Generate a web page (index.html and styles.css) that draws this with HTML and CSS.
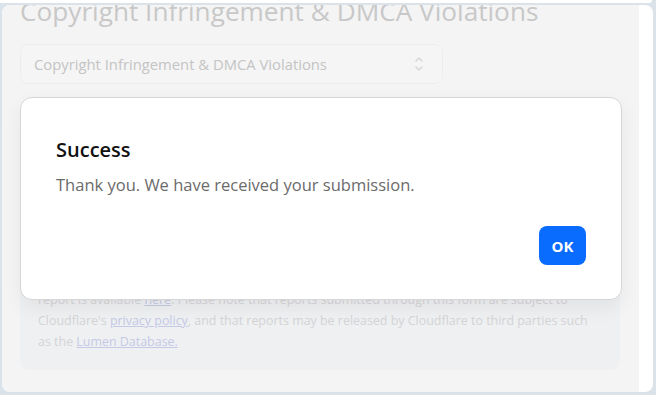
FILE: index.html
```html
<!DOCTYPE html>
<html lang="en">
<head>
  <meta charset="UTF-8" />
  <meta name="viewport" content="width=device-width, initial-scale=1.0" />
  <title>Report Abuse</title>
  <link rel="stylesheet" href="styles.css">
</head>
<body>
  <div class="prev-card"></div>

  <div class="page-card">
    <div class="form-area">
      <h1 class="form-title">Copyright Infringement &amp; DMCA Violations</h1>

      <div class="select-box">
        <span>Copyright Infringement &amp; DMCA Violations</span>
        <svg class="chevrons" width="10" height="16" viewBox="0 0 10 16">
          <path d="M1.5 5.5 L5 2 L8.5 5.5" />
          <path d="M1.5 10.5 L5 14 L8.5 10.5" />
        </svg>
      </div>

      <div class="notice">
        <p>
          Once submitted, you will receive a confirmation email. A copy of your<br>
          report is available <a href="#">here</a>. Please note that reports submitted through this form are subject to<br>
          Cloudflare's <a href="#">privacy policy</a>, and that reports may be released by Cloudflare to third parties such<br>
          as the <a href="#">Lumen Database.</a>
        </p>
      </div>
    </div>

    <div class="modal">
      <h2>Success</h2>
      <p>Thank you. We have received your submission.</p>
      <div class="modal-actions">
        <button>OK</button>
      </div>
    </div>
  </div>
</body>
</html>
```

FILE: styles.css
```css
html, body {
  margin: 0;
  padding: 0;
  height: 100%;
  overflow: hidden;
  background: #dae3ea;
  font-family: 'Open Sans', 'Noto Sans', sans-serif;
}
.prev-card {
  height: 3px;
  margin-right: 4px;
  background: #fff;
  border-radius: 0 0 8px 0;
}
.page-card {
  position: relative;
  margin: 2px 3px 0 2px;
  height: 387px;
  background: #fff;
  border-radius: 8px;
  overflow: hidden;
}
.form-area {
  display: flow-root;
  width: 637px;
  height: 100%;
  box-sizing: border-box;
  padding: 0 18px;
  background: #f4f4f4;
  border-radius: 8px 0 0 8px;
}
.form-title {
  margin: -12px 0 0 0;
  font-size: 26.2px;
  font-weight: 400;
  line-height: 36px;
  color: #c8c8c8;
  white-space: nowrap;
}
.select-box {
  margin-top: 15px;
  width: 423px;
  height: 40px;
  box-sizing: border-box;
  display: flex;
  align-items: center;
  justify-content: space-between;
  padding: 0 18px 0 13px;
  border: 1px solid #ededed;
  border-radius: 8px;
  background: #f5f5f5;
  font-size: 14.8px;
  color: #c4c4c4;
}
.chevrons path {
  fill: none;
  stroke: #d3d3d3;
  stroke-width: 1.2;
}
.notice {
  margin-top: 166px;
  height: 120px;
  box-sizing: border-box;
  padding: 0 18px;
  display: flex;
  align-items: flex-end;
  background: #eff0f2;
  border-radius: 8px;
  width: 600px;
}
.notice p {
  margin: 0 0 18px 0;
  font-size: 12.45px;
  line-height: 21px;
  color: #d4d4d6;
  white-space: nowrap;
}
.notice a {
  color: #c5c9e6;
}
.modal {
  position: absolute;
  left: 18px;
  top: 92px;
  width: 602px;
  height: 203px;
  box-sizing: border-box;
  padding: 38px 35px 0 35px;
  background: #fff;
  border: 1px solid #d6d6d6;
  border-radius: 12px;
  box-shadow: 0 8px 20px rgba(0, 0, 0, 0.06);
}
.modal h2 {
  margin: 0;
  font-size: 20px;
  font-weight: 600;
  line-height: 28px;
  color: #111;
}
.modal p {
  margin: 10px 0 0 0;
  font-size: 16.5px;
  line-height: 22px;
  color: #6b6b6b;
}
.modal-actions {
  display: flex;
  justify-content: flex-end;
  margin-top: 30px;
}
.modal-actions button {
  width: 47px;
  height: 39px;
  border: none;
  border-radius: 8px;
  background: #0a6cff;
  color: #fff;
  font-family: inherit;
  font-size: 15px;
  font-weight: 700;
  cursor: pointer;
}
```
